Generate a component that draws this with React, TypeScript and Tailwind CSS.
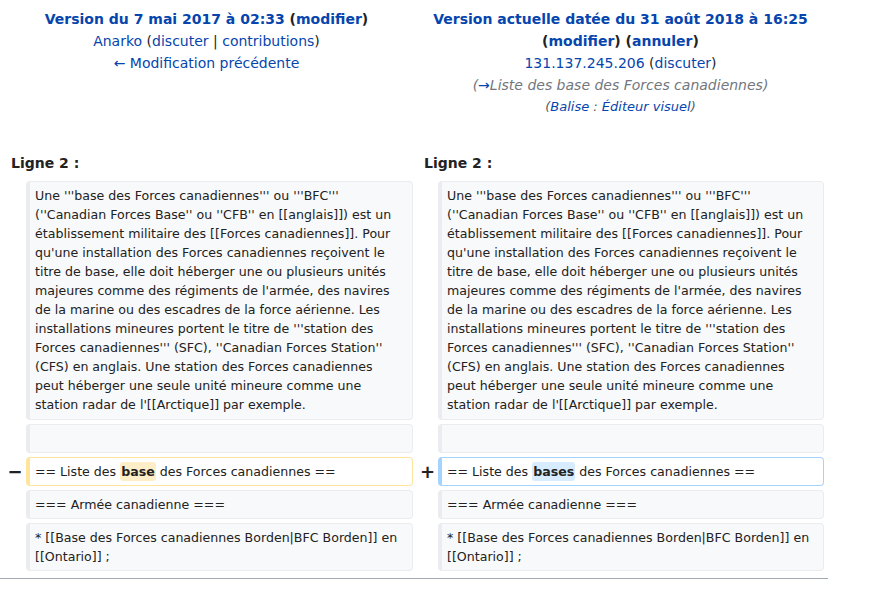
const introHead =
  "Une '''base des Forces canadiennes''' ou '''BFC''' (''Canadian Forces Base'' ou ''CFB'' en [[anglais]]) est un établissement militaire des [[Forces canadiennes]]. Pour qu'une installation des Forces canadiennes reçoivent le titre de base, elle doit héberger une ou plusieurs unités majeures comme des régiments de l'armée, des navires de la marine ou des escadres de la force aérienne. Les installations mineures portent le titre de '''station des Forces canadiennes''' (SFC), ''Canadian Forces Station'' (CFS) en anglais. Une station des Forces canadiennes";
const introTail = "peut héberger une seule unité mineure comme une station radar de l'[[Arctique]] par exemple.";

const font = { fontFamily: "'DejaVu Sans', sans-serif" };

function Ctx({ children, tight, tall }: { children?: React.ReactNode; tight?: boolean; tall?: boolean }) {
  return (
    <div
      className={`min-h-[29px] rounded-[4px] border border-l-4 border-[#eaecf0] bg-[#f8f9fa] pt-[4px] ${tall ? "pb-[5px]" : "pb-[4px]"} pl-[5px] ${
        tight ? "pr-[5px]" : "pr-[6px]"
      } text-[12.6px] leading-[19px] text-[#222] break-words`}
    >
      {children}
    </div>
  );
}

function Changed({ kind, word }: { kind: "del" | "add"; word: string }) {
  const box = kind === "del" ? "border-[#ffe49c]" : "border-[#a3d3ff]";
  const hl = kind === "del" ? "bg-[#feeec8]" : "bg-[#d8ecff]";
  return (
    <div className={`min-h-[29px] rounded-[4px] border border-l-4 ${box} bg-white py-[4px] pl-[5px] pr-[6px] text-[12.6px] leading-[19px] text-[#222]`}>
      == Liste des <span className={`${hl} rounded-[3px] px-[1px] py-[2px] font-bold`}>{word}</span> des Forces canadiennes ==
    </div>
  );
}

function Marker({ sign }: { sign: string }) {
  return (
    <div className="flex items-center justify-center pl-[4px] text-[18px] font-bold leading-none text-[#222]">
      {sign}
    </div>
  );
}

export default function App() {
  return (
    <div className="min-h-[594px] w-[874px] bg-white text-[#222]" style={font}>
      <div className="w-[828px]">
        <div className="grid grid-cols-[413px_415px] pt-[8px] text-center text-[14px] leading-[22px]">
          <div>
            <div className="font-bold">
              <span className="text-[#0645ad]">Version du 7 mai 2017 à 02:33</span>{" "}
              (<span className="text-[#0645ad]">modifier</span>)
            </div>
            <div>
              <span className="text-[#0645ad]">Anarko</span> (
              <span className="text-[#0645ad]">discuter</span> |{" "}
              <span className="text-[#0645ad]">contributions</span>)
            </div>
            <div className="text-[#0645ad]">← Modification précédente</div>
          </div>
          <div>
            <div className="px-[8px] font-bold">
              <span className="text-[#0645ad]">Version actuelle datée du 31 août 2018 à 16:25</span>{" "}
              (<span className="text-[#0645ad]">modifier</span>) (
              <span className="text-[#0645ad]">annuler</span>)
            </div>
            <div>
              <span className="text-[#0645ad]">131.137.245.206</span> (
              <span className="text-[#0645ad]">discuter</span>)
            </div>
            <div className="italic text-[#72777d]">
              (<span className="text-[#0645ad]">→</span>Liste des base des Forces canadiennes)
            </div>
            <div className="text-[13px] italic text-[#54595d]">
              (<span className="text-[#0645ad]">Balise</span> : <span className="text-[#0645ad]">Éditeur visuel</span>)
            </div>
          </div>
        </div>

        <div className="mt-[34px] grid grid-cols-[413px_415px] text-[14px] font-bold leading-[22px]">
          <div className="pl-[11px]">Ligne 2 :</div>
          <div className="pl-[11px]">Ligne 2 :</div>
        </div>

        <div className="mt-[7px] grid grid-cols-[26px_387px_25px_386px] gap-y-[4px]">
          <div />
          <Ctx tight tall>
            {introHead}
            <br />
            {introTail}
          </Ctx>
          <div />
          <Ctx tall>
            {introHead} {introTail}
          </Ctx>

          <div />
          <Ctx />
          <div />
          <Ctx />

          <Marker sign="−" />
          <Changed kind="del" word="base" />
          <Marker sign="+" />
          <Changed kind="add" word="bases" />

          <div />
          <Ctx>=== Armée canadienne ===</Ctx>
          <div />
          <Ctx>=== Armée canadienne ===</Ctx>

          <div />
          <Ctx>* [[Base des Forces canadiennes Borden|BFC Borden]] en [[Ontario]] ;</Ctx>
          <div />
          <Ctx>* [[Base des Forces canadiennes Borden|BFC Borden]] en [[Ontario]] ;</Ctx>
        </div>

        <div className="mt-[7px] border-t border-[#a2a9b1]" />
      </div>
    </div>
  );
}
